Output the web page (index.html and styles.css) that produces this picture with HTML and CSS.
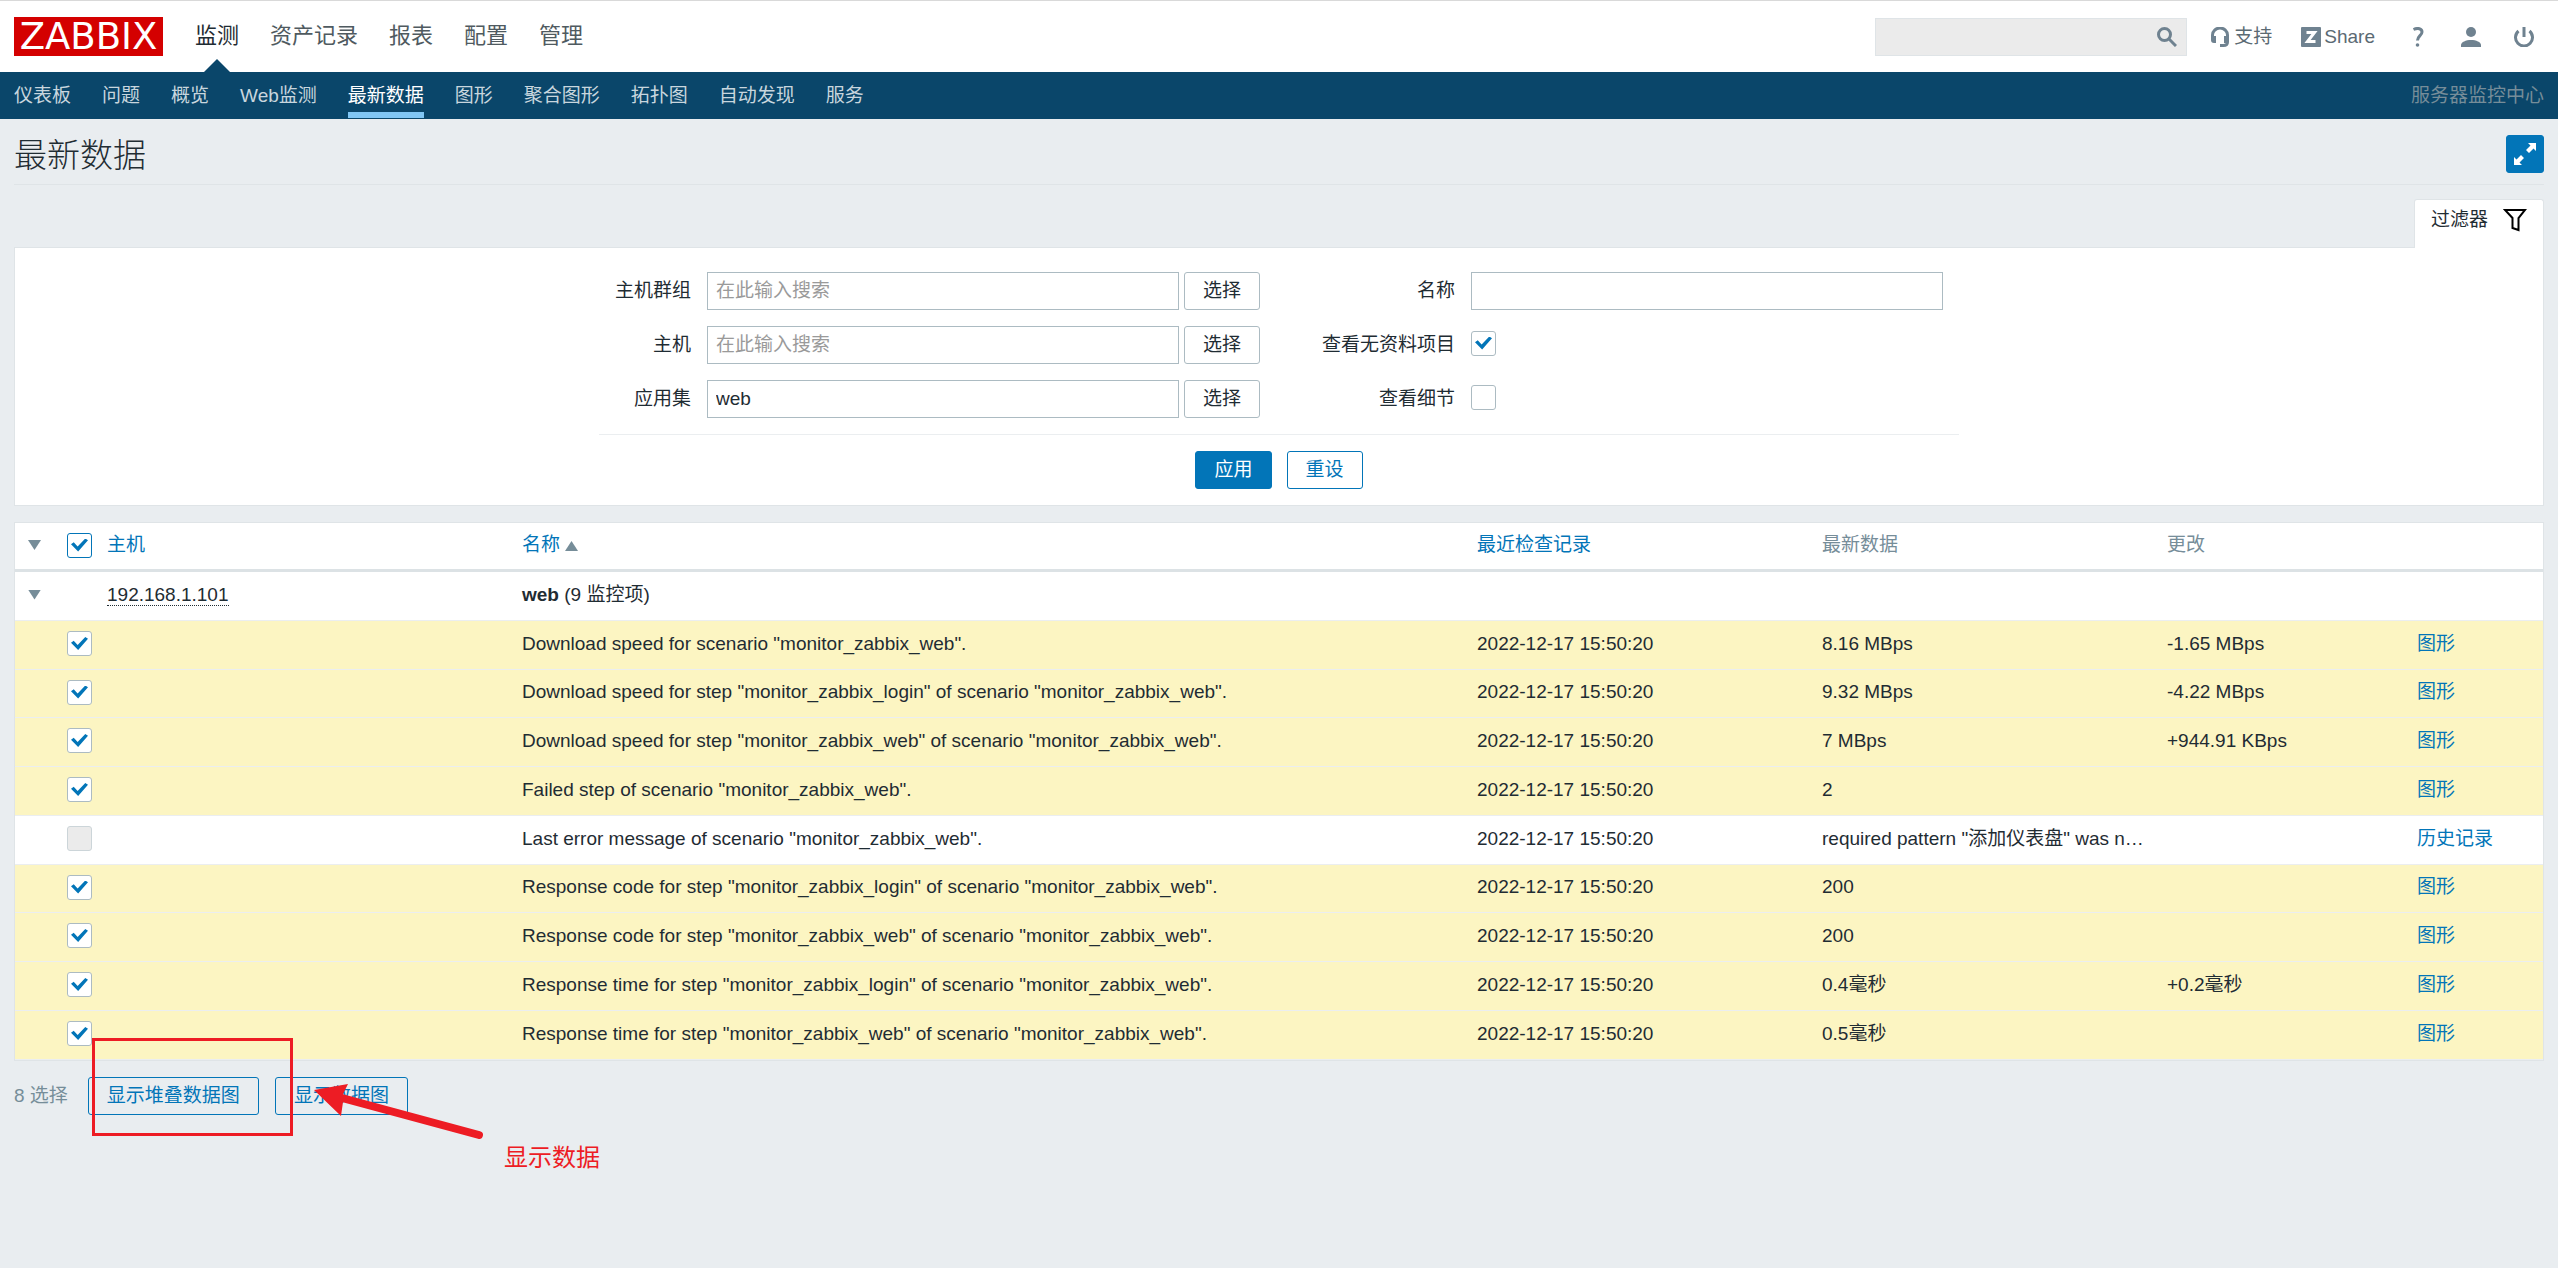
FILE: index.html
```html
<!DOCTYPE html>
<html lang="zh-CN">
<head>
    <meta charset="UTF-8">
    <meta name="viewport" content="width=device-width, initial-scale=1.0">
    <title>最新数据</title>
    <link rel="stylesheet" href="styles.css">
</head>
<body>
    <header class="header">
        <a class="logo" href="#">ZABBIX</a>
        <nav class="top-nav">
            <a class="selected" href="#">监测</a>
            <a href="#">资产记录</a>
            <a href="#">报表</a>
            <a href="#">配置</a>
            <a href="#">管理</a>
        </nav>
        <form class="search">
            <input type="text" aria-label="搜索">
            <button type="submit" aria-label="搜索">
                <svg viewBox="0 0 20 20" width="20" height="20"><circle cx="7.500" cy="7.500" r="6" /><path d="M12 12l7 7" /></svg>
            </button>
        </form>
        <div class="user-nav">
            <a class="support" href="#">
                <svg viewBox="0 0 18 20" width="18" height="20"><path class="line" d="M1.500 12V8a7.500 7 0 0 1 15 0v7c0 2-1 3.500-4 3.500" /><path d="M0 9h5v7H3a3 3 0 0 1-3-3zM18 9h-5v7h2a3 3 0 0 0 3-3zM9 17h4v3H9z" /></svg>
                支持
            </a>
            <a class="share" href="#">
                <svg viewBox="0 0 20 20" width="20" height="20"><rect width="20" height="20" rx="1" /><path class="cut" d="M5.500 5.500h8l-7 9h8" /></svg>
                Share
            </a>
            <a class="icon" href="#" aria-label="帮助">
                <svg viewBox="0 0 20 20" width="20" height="20"><path class="line thin" d="M5.500 2.500C10 .500 14 1.500 14 5c0 3.500-4.500 4-4.500 8.500" /><circle cx="9.500" cy="18" r="1.800" /></svg>
            </a>
            <a class="icon" href="#" aria-label="用户">
                <svg viewBox="0 0 20 20" width="20" height="20"><circle cx="10" cy="5" r="5" /><path d="M0 20v-2c0-3 5-5 10-5s10 2 10 5v2z" /></svg>
            </a>
            <a class="icon" href="#" aria-label="退出">
                <svg viewBox="0 0 20 20" width="20" height="20"><path class="line" d="M10 0v10" /><path class="line thin" d="M4.500 4a8.500 8.500 0 1 0 11 0" /></svg>
            </a>
        </div>
    </header>

    <nav class="sub-nav">
        <a href="#">仪表板</a>
        <a href="#">问题</a>
        <a href="#">概览</a>
        <a href="#">Web监测</a>
        <a class="selected" href="#">最新数据</a>
        <a href="#">图形</a>
        <a href="#">聚合图形</a>
        <a href="#">拓扑图</a>
        <a href="#">自动发现</a>
        <a href="#">服务</a>
        <span class="server-name">服务器监控中心</span>
    </nav>

    <main class="wrapper">
        <div class="header-title">
            <h1>最新数据</h1>
            <button class="btn-max" type="button" aria-label="全屏">
                <svg viewBox="0 0 24 24" width="24" height="24"><path d="M15 1h8v8l-2.500-2.500-4.500 4.500-3-3 4.500-4.500zM1 23v-8l2.500 2.500L8 13l3 3-4.500 4.500L9 23z" /></svg>
            </button>
        </div>

        <div class="filter-tabs">
            <a class="filter-tab" href="#">
                过滤器
                <svg viewBox="0 0 24 24" width="24" height="24"><path d="M2 2h20l-6.500 8v12l-6-2V10z" /></svg>
            </a>
        </div>
        <form class="filter">
            <div class="filter-forms">
                <div class="filter-col">
                    <label for="groups">主机群组</label>
                    <div class="field">
                        <input type="text" id="groups" placeholder="在此输入搜索">
                        <button class="btn-grey" type="button">选择</button>
                    </div>
                    <label for="hosts">主机</label>
                    <div class="field">
                        <input type="text" id="hosts" placeholder="在此输入搜索">
                        <button class="btn-grey" type="button">选择</button>
                    </div>
                    <label for="application">应用集</label>
                    <div class="field">
                        <input type="text" id="application" value="web">
                        <button class="btn-grey" type="button">选择</button>
                    </div>
                </div>
                <div class="filter-col filter-col-wide">
                    <label for="name">名称</label>
                    <div class="field"><input type="text" id="name"></div>
                    <label for="nodata">查看无资料项目</label>
                    <div class="field"><input type="checkbox" id="nodata" checked></div>
                    <label for="details">查看细节</label>
                    <div class="field"><input type="checkbox" id="details"></div>
                </div>
            </div>
            <div class="filter-buttons">
                <button class="btn" type="submit">应用</button>
                <button class="btn-alt" type="reset">重设</button>
            </div>
        </form>

        <table class="list-table">
            <colgroup>
                <col class="col-toggle">
                <col class="col-check">
                <col class="col-host">
                <col>
                <col class="col-data">
                <col class="col-data">
                <col class="col-change">
                <col class="col-link">
            </colgroup>
            <thead>
                <tr>
                    <th><button class="toggle" type="button" aria-label="折叠"></button></th>
                    <th><input class="check-all" type="checkbox" aria-label="全选" checked></th>
                    <th><a href="#">主机</a></th>
                    <th><a class="sorted" href="#">名称</a></th>
                    <th><a href="#">最近检查记录</a></th>
                    <th>最新数据</th>
                    <th>更改</th>
                    <th></th>
                </tr>
            </thead>
            <tbody>
                <tr>
                    <td><button class="toggle" type="button" aria-label="折叠"></button></td>
                    <td></td>
                    <td><a class="host" href="#">192.168.1.101</a></td>
                    <td colspan="5"><b>web</b> (9 监控项)</td>
                </tr>
                <tr class="row-selected">
                    <td></td>
                    <td><input type="checkbox" aria-label="选择监控项" checked></td>
                    <td></td>
                    <td>Download speed for scenario "monitor_zabbix_web".</td>
                    <td>2022-12-17 15:50:20</td>
                    <td>8.16 MBps</td>
                    <td>-1.65 MBps</td>
                    <td><a href="#">图形</a></td>
                </tr>
                <tr class="row-selected">
                    <td></td>
                    <td><input type="checkbox" aria-label="选择监控项" checked></td>
                    <td></td>
                    <td>Download speed for step "monitor_zabbix_login" of scenario "monitor_zabbix_web".</td>
                    <td>2022-12-17 15:50:20</td>
                    <td>9.32 MBps</td>
                    <td>-4.22 MBps</td>
                    <td><a href="#">图形</a></td>
                </tr>
                <tr class="row-selected">
                    <td></td>
                    <td><input type="checkbox" aria-label="选择监控项" checked></td>
                    <td></td>
                    <td>Download speed for step "monitor_zabbix_web" of scenario "monitor_zabbix_web".</td>
                    <td>2022-12-17 15:50:20</td>
                    <td>7 MBps</td>
                    <td>+944.91 KBps</td>
                    <td><a href="#">图形</a></td>
                </tr>
                <tr class="row-selected">
                    <td></td>
                    <td><input type="checkbox" aria-label="选择监控项" checked></td>
                    <td></td>
                    <td>Failed step of scenario "monitor_zabbix_web".</td>
                    <td>2022-12-17 15:50:20</td>
                    <td>2</td>
                    <td></td>
                    <td><a href="#">图形</a></td>
                </tr>
                <tr>
                    <td></td>
                    <td><input type="checkbox" aria-label="选择监控项" disabled></td>
                    <td></td>
                    <td>Last error message of scenario "monitor_zabbix_web".</td>
                    <td>2022-12-17 15:50:20</td>
                    <td>required pattern "添加仪表盘" was n…</td>
                    <td></td>
                    <td><a href="#">历史记录</a></td>
                </tr>
                <tr class="row-selected">
                    <td></td>
                    <td><input type="checkbox" aria-label="选择监控项" checked></td>
                    <td></td>
                    <td>Response code for step "monitor_zabbix_login" of scenario "monitor_zabbix_web".</td>
                    <td>2022-12-17 15:50:20</td>
                    <td>200</td>
                    <td></td>
                    <td><a href="#">图形</a></td>
                </tr>
                <tr class="row-selected">
                    <td></td>
                    <td><input type="checkbox" aria-label="选择监控项" checked></td>
                    <td></td>
                    <td>Response code for step "monitor_zabbix_web" of scenario "monitor_zabbix_web".</td>
                    <td>2022-12-17 15:50:20</td>
                    <td>200</td>
                    <td></td>
                    <td><a href="#">图形</a></td>
                </tr>
                <tr class="row-selected">
                    <td></td>
                    <td><input type="checkbox" aria-label="选择监控项" checked></td>
                    <td></td>
                    <td>Response time for step "monitor_zabbix_login" of scenario "monitor_zabbix_web".</td>
                    <td>2022-12-17 15:50:20</td>
                    <td>0.4毫秒</td>
                    <td>+0.2毫秒</td>
                    <td><a href="#">图形</a></td>
                </tr>
                <tr class="row-selected">
                    <td></td>
                    <td><input type="checkbox" aria-label="选择监控项" checked></td>
                    <td></td>
                    <td>Response time for step "monitor_zabbix_web" of scenario "monitor_zabbix_web".</td>
                    <td>2022-12-17 15:50:20</td>
                    <td>0.5毫秒</td>
                    <td></td>
                    <td><a href="#">图形</a></td>
                </tr>
            </tbody>
        </table>

        <div class="action-buttons">
            <span class="selected-count">8 选择</span>
            <button class="btn-alt" type="button">显示堆叠数据图</button>
            <button class="btn-alt" type="button">显示数据图</button>

            <!-- 标注 -->
            <div class="note-box"></div>
            <svg class="note-arrow" viewBox="0 0 172 58" width="172" height="58"><path class="shaft" d="M28 14L165 51" /><path d="M0 6L34 0l-6 12 1 6-2 14z" /></svg>
            <span class="note-text">显示数据</span>
        </div>
    </main>
</body>
</html>
```
FILE: styles.css
```css
* {
    box-sizing: border-box;
}

body {
    min-height: 100vh;
    margin: 0;
    background: #e9edf0;
    color: #1f2c33;
    font-family: "Liberation Sans", Arial, "Noto Sans CJK SC", sans-serif;
    font-size: 19px;
    line-height: 24px;
}

a {
    color: #0275b8;
    text-decoration: none;
}

button,
input {
    font: inherit;
    color: inherit;
}

button {
    cursor: pointer;
}

/* Header */
.header {
    display: flex;
    align-items: center;
    height: 72px;
    padding: 0 14px;
    background: #fff;
    border-top: 1px solid #d9d9d9;
}

.logo {
    width: 149px;
    height: 39px;
    background: #d40000;
    color: #fff;
    font-family: "DejaVu Sans", sans-serif;
    font-size: 37px;
    line-height: 39px;
    text-align: center;
}

.top-nav {
    display: flex;
    gap: 31px;
    align-self: stretch;
    margin-left: 32px;
    font-size: 22px;
    line-height: 70px;
}

.top-nav a {
    position: relative;
    color: #4f5a60;
}

.top-nav .selected {
    color: #1f2c33;
}

.top-nav .selected::after {
    content: '';
    position: absolute;
    left: 50%;
    bottom: 0;
    margin-left: -13px;
    border: 13px solid transparent;
    border-top: 0;
    border-bottom-color: #0a466a;
}

.search {
    display: flex;
    width: 312px;
    height: 38px;
    margin-left: auto;
    background: #ebebeb;
    border: 1px solid #dfe4e7;
}

.search input {
    flex: 1;
    min-width: 0;
    padding: 0 8px;
    background: none;
    border: 0;
}

.search button {
    width: 38px;
    padding: 0 9px;
    background: none;
    border: 0;
}

.search svg {
    display: block;
    fill: none;
    stroke: #6f8290;
    stroke-width: 3;
}

.user-nav {
    display: flex;
    align-items: center;
    margin-right: 10px;
    fill: #6f8290;
}

.user-nav a {
    display: flex;
    align-items: center;
    color: #5b6a73;
}

.user-nav .line,
.user-nav .cut {
    fill: none;
    stroke: #6f8290;
    stroke-width: 3;
}

.user-nav .cut {
    stroke: #fff;
}

.support {
    gap: 5px;
    margin-left: 24px;
}

.share {
    gap: 3px;
    margin-left: 29px;
}

.icon {
    margin-left: 33px;
}

/* Second level menu */
.sub-nav {
    display: flex;
    gap: 31px;
    height: 47px;
    padding: 0 14px;
    background: #0a466a;
    line-height: 47px;
}

.sub-nav a {
    height: 46px;
    color: #c8d6de;
}

.sub-nav .selected {
    color: #fff;
    border-bottom: 6px solid #80c6f4;
}

.server-name {
    margin-left: auto;
    color: #768d99;
}

/* Page */
.wrapper {
    padding: 0 14px;
}

.header-title {
    display: flex;
    align-items: center;
    justify-content: space-between;
    height: 66px;
    padding-top: 5px;
    border-bottom: 1px solid #dfe4e7;
}

.header-title h1 {
    margin: 0;
    padding-top: 4px;
    font-size: 33px;
    font-weight: 300;
    line-height: 40px;
}

.btn-max {
    width: 38px;
    height: 38px;
    padding: 6px;
    background: #0275b8;
    border: 1px solid #0275b8;
    border-radius: 3px;
}

.btn-max svg {
    display: block;
    fill: #fff;
}

/* Filter */
.filter-tabs {
    display: flex;
    justify-content: flex-end;
    padding-top: 14px;
}

.filter-tab {
    position: relative;
    display: flex;
    align-items: center;
    gap: 15px;
    height: 49px;
    margin-bottom: -1px;
    padding: 0 16px 8px;
    background: #fff;
    border: 1px solid #dfe4e7;
    border-bottom: 0;
    border-radius: 3px 3px 0 0;
    color: #1f2c33;
}

.filter-tab svg {
    fill: none;
    stroke: #000;
    stroke-width: 2;
}

.filter {
    padding: 24px 14px 16px;
    background: #fff;
    border: 1px solid #dfe4e7;
}

.filter-forms {
    display: grid;
    grid-template-columns: 1fr 1fr;
    max-width: 1360px;
    margin: 0 auto;
    padding-bottom: 16px;
    border-bottom: 1px solid #ebeef0;
}

.filter-col {
    display: grid;
    grid-template-columns: 92px 1fr;
    gap: 16px;
    align-items: center;
}

.filter-col-wide {
    grid-template-columns: 176px 1fr;
}

.filter-col label {
    text-align: right;
}

.field {
    display: flex;
    align-items: center;
    gap: 5px;
    height: 38px;
}

.field input[type="text"] {
    width: 472px;
    height: 38px;
    padding: 0 8px;
    background: #fff;
    border: 1px solid #acbbc2;
}

.field input[type="checkbox"] {
    margin-bottom: 4px;
}

.field input::placeholder {
    color: #9a9a9a;
}

.filter-buttons {
    display: flex;
    justify-content: center;
    gap: 15px;
    padding-top: 16px;
}

.btn,
.btn-alt,
.btn-grey {
    height: 38px;
    padding: 0 18px;
    border: 1px solid #0275b8;
    border-radius: 3px;
}

.btn {
    background: #0275b8;
    color: #fff;
}

.btn-alt {
    background: none;
    color: #0275b8;
}

.btn-grey {
    background: #fff;
    border-color: #acbbc2;
}

/* Checkboxes */
input[type="checkbox"] {
    display: grid;
    place-items: center;
    appearance: none;
    width: 25px;
    height: 25px;
    margin: 0;
    background: #fff;
    border: 1px solid #acbbc2;
    border-radius: 3px;
}

input[type="checkbox"]:checked::before {
    content: '';
    width: 17px;
    height: 13px;
    background: #0275b8;
    clip-path: polygon(0 45%, 16% 28%, 39% 62%, 84% 0, 100% 14%, 42% 100%);
}

input[type="checkbox"]:disabled {
    background: #ebebeb;
    border-color: #ccd5d9;
}

input.check-all {
    border-color: #0275b8;
}

/* Data table */
.list-table {
    width: 100%;
    margin-top: 16px;
    table-layout: fixed;
    border-collapse: separate;
    border-spacing: 0;
    background: #fff;
    border: 1px solid #dfe4e7;
}

.col-toggle {
    width: 44px;
}

.col-check {
    width: 40px;
}

.col-host {
    width: 415px;
}

.col-data {
    width: 345px;
}

.col-change {
    width: 250px;
}

.col-link {
    width: 134px;
}

.list-table th {
    height: 49px;
    padding: 0 8px 2px;
    border-bottom: 3px solid #dce2e5;
    color: #768d99;
    font-weight: normal;
    text-align: left;
}

.list-table td {
    height: 49px;
    padding: 0 8px 3px;
    border-bottom: 1px solid #ebeef0;
    white-space: nowrap;
}

.list-table tr:nth-child(4n+3) td {
    height: 48px;
}

.row-selected {
    background: #fcf5c2;
}

.toggle {
    display: block;
    width: 13px;
    height: 10px;
    margin-left: 5px;
    padding: 0;
    background: #768d99;
    border: 0;
    clip-path: polygon(0 0, 100% 0, 50% 100%);
}

.sorted::after {
    content: '';
    display: inline-block;
    width: 13px;
    height: 10px;
    margin-left: 5px;
    background: #768d99;
    clip-path: polygon(0 100%, 50% 0, 100% 100%);
}

.host {
    color: #1f2c33;
    border-bottom: 1px dotted #1f2c33;
}

/* Footer actions */
.action-buttons {
    position: relative;
    display: flex;
    align-items: center;
    gap: 16px;
    padding: 16px 0;
}

.selected-count {
    margin-right: 4px;
    color: #768d99;
}

/* Annotations drawn over the page */
.note-box,
.note-arrow,
.note-text {
    position: absolute;
    color: #ed1c24;
    pointer-events: none;
}

.note-box {
    left: 78px;
    top: -23px;
    width: 201px;
    height: 98px;
    border: 3px solid #ed1c24;
}

.note-arrow {
    left: 300px;
    top: 23px;
    fill: #ed1c24;
}

.note-arrow .shaft {
    stroke: #ed1c24;
    stroke-width: 8;
    stroke-linecap: round;
}

.note-text {
    left: 490px;
    top: 81px;
    font-size: 24px;
    line-height: 32px;
}
```
